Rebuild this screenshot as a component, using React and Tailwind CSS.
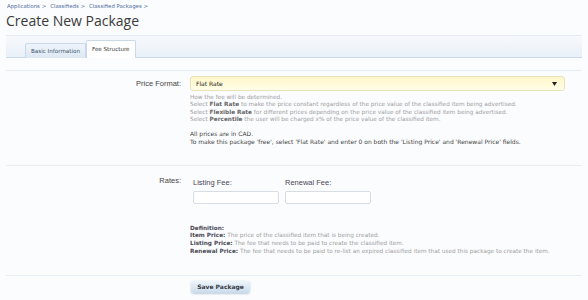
export default function App() {
    const small = { fontFamily: '"DejaVu Sans", Verdana, sans-serif' };
    const label = { fontFamily: '"Liberation Sans", Arial, sans-serif' };

    return (
        <div className="min-h-[300px] w-[588px] bg-[#fbfcfe] text-[#333]" style={small}>
            <div className="px-[7px] pt-[3px] text-[5.4px] leading-[7px] text-[#4d6c9c]">
                <span>Applications &gt;</span>
                <span className="ml-[4px]">Classifieds &gt;</span>
                <span className="ml-[4px]">Classified Packages &gt;</span>
            </div>

            <h1 className="mt-[2px] px-[6px] text-[14px] leading-[18px] text-[#3a3a3a]" style={{ fontFamily: '"Open Sans", sans-serif' }}>
                Create New Package
            </h1>

            <div className="mx-[6px] mt-[5px] h-[23px] border-t border-b border-t-[#e4ebf2] border-b-[#c9d9ea] bg-gradient-to-b from-[#f7f9fc] to-[#e9f0f8] flex items-end pl-[19px]">
                <div className="h-[15px] px-[5px] mb-[-1px] flex items-center border border-[#c9d9ea] border-b-0 rounded-t-[2px] bg-gradient-to-b from-[#eef4fb] to-[#dde8f4] text-[5.6px] text-[#44546a]">
                    Basic Information
                </div>
                <div className="h-[18px] px-[5px] mb-[-1px] flex items-center border border-[#c9d9ea] border-b-0 rounded-t-[2px] bg-white text-[5.6px] text-[#333]">
                    Fee Structure
                </div>
            </div>

            <div className="mx-[6px] mt-[12px] border-t border-[#e6eef4]">
                {/* Price format */}
                <div className="flex pt-[5px]">
                    <div className="w-[177px] shrink-0 flex justify-end pr-[2px] text-[7.5px] leading-[15px] text-[#444]" style={label}>Price Format:</div>
                    <div className="ml-[7px] flex-1 min-w-0 pr-[17px]">
                        <div className="h-[15px] rounded-[3px] border border-[#e8e2bc] bg-gradient-to-b from-[#fff6c8] to-[#fffde8] flex items-center justify-between px-[5px] text-[6px] text-[#222]">
                            <span>Flat Rate</span>
                            <svg width="5" height="4" viewBox="0 0 5 4" className="mr-[2px]">
                                <path d="M0 0h5L2.5 4z" fill="#222" />
                            </svg>
                        </div>
                        <div className="mt-[3px] text-[5.75px] leading-[7.4px] text-[#a0a0a0]">
                            <p>How the fee will be determined.</p>
                            <p>Select <b className="text-[#666]">Flat Rate</b> to make the price constant regardless of the price value of the classified item being advertised.</p>
                            <p>Select <b className="text-[#666]">Flexible Rate</b> for different prices depending on the price value of the classified item being advertised.</p>
                            <p>Select <b className="text-[#666]">Percentile</b> the user will be charged x% of the price value of the classified item.</p>
                        </div>
                        <div className="mt-[6px] text-[6px] leading-[8px] text-[#444]">
                            <p>All prices are in CAD.</p>
                            <p>To make this package 'free', select 'Flat Rate' and enter 0 on both the 'Listing Price' and 'Renewal Price' fields.</p>
                        </div>
                    </div>
                </div>

                {/* Rates */}
                <div className="mt-[19px] border-t border-[#e6eef4] flex pt-[10px]">
                    <div className="w-[177px] shrink-0 flex justify-end pr-[2px] text-[7.5px] leading-[9px] text-[#444]" style={label}>
                        <span>Rates:</span>
                    </div>
                    <div className="ml-[10px] flex-1 min-w-0">
                        <div className="flex gap-[6px] pt-[2px]">
                            <div>
                                <div className="text-[7.5px] leading-[9px] text-[#4a4654]" style={label}>Listing Fee:</div>
                                <div className="mt-[4px] w-[86px] h-[13px] rounded-[2px] border border-[#d8dde3] bg-white" />
                            </div>
                            <div>
                                <div className="text-[7.5px] leading-[9px] text-[#4a4654]" style={label}>Renewal Fee:</div>
                                <div className="mt-[4px] w-[86px] h-[13px] rounded-[2px] border border-[#d8dde3] bg-white" />
                            </div>
                        </div>
                        <div className="mt-[21px] -ml-[3px] text-[5.75px] leading-[7.7px] text-[#a0a0a0]">
                            <p className="font-bold text-[#4a4a55]">Definition:</p>
                            <p><b className="text-[#4a4a55]">Item Price:</b> The price of the classified item that is being created.</p>
                            <p><b className="text-[#4a4a55]">Listing Price:</b> The fee that needs to be paid to create the classified item.</p>
                            <p><b className="text-[#4a4a55]">Renewal Price:</b> The fee that needs to be paid to re-list an expired classified item that used this package to create the item.</p>
                        </div>
                    </div>
                </div>

                {/* Actions */}
                <div className="mt-[20px] border-t border-[#e6eef4] pt-[4px] pl-[185px] flex">
                    <button type="button" className="w-[59px] h-[13px] rounded-[3px] bg-gradient-to-b from-[#f2f7fc] to-[#c8dced] shadow-[0_1px_2px_rgba(80,110,140,0.35)] text-[6px] font-bold leading-[13px] text-[#3a3a44]">
                        Save Package
                    </button>
                </div>
            </div>
        </div>
    );
}
